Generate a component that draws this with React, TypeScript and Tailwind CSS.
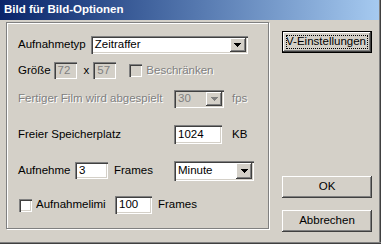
import React from "react";

const sunken =
  "shadow-[inset_1px_1px_#808080,inset_2px_2px_#404040,inset_-1px_-1px_#ffffff,inset_-2px_-2px_#d4d0c8]";
const raised =
  "shadow-[inset_-1px_-1px_#404040,inset_1px_1px_#ffffff,inset_-2px_-2px_#808080,inset_2px_2px_#d4d0c8]";
const grayText = "text-[#808080] [text-shadow:1px_1px_0_#ffffff]";

const Field = ({
  value,
  width,
  height,
  disabled,
}: {
  value: string;
  width: string;
  height: string;
  disabled?: boolean;
}) => (
  <div
    className={`${width} ${height} ${sunken} ${
      disabled ? "bg-[#d4d0c8] text-[#808080]" : "bg-white"
    } flex items-center pl-[4px] shrink-0`}
  >
    {value}
  </div>
);

const Arrow = ({ disabled }: { disabled?: boolean }) => (
  <svg width="7" height="4" viewBox="0 0 7 4" shapeRendering="crispEdges">
    <polygon points="0,0 7,0 3.5,4" fill={disabled ? "#808080" : "#000000"} />
  </svg>
);

const Combo = ({
  value,
  width,
  height,
  disabled,
}: {
  value: string;
  width: string;
  height: string;
  disabled?: boolean;
}) => (
  <div
    className={`${width} ${height} ${sunken} ${
      disabled ? "bg-[#d4d0c8] text-[#808080]" : "bg-white"
    } flex items-stretch p-[2px] shrink-0`}
  >
    <div className="flex-1 flex items-center pl-[2px]">{value}</div>
    <div className={`w-[16px] bg-[#d4d0c8] ${raised} flex items-center justify-center`}>
      <Arrow disabled={disabled} />
    </div>
  </div>
);

const Check = ({ disabled }: { disabled?: boolean }) => (
  <div
    className={`w-[13px] h-[13px] shrink-0 ${sunken} ${
      disabled ? "bg-[#d4d0c8]" : "bg-white"
    }`}
  />
);

const Button = ({ label, isDefault }: { label: string; isDefault?: boolean }) =>
  isDefault ? (
    <div className="w-[90px] h-[22px] border border-black bg-[#d4d0c8] shrink-0">
      <div className={`w-full h-full ${raised} p-[3px]`}>
        <div className="w-full h-full border border-dotted border-black flex items-center justify-end overflow-hidden whitespace-nowrap pr-[1px]">
          {label}
        </div>
      </div>
    </div>
  ) : (
    <div
      className={`w-[90px] h-[22px] bg-[#d4d0c8] ${raised} flex items-center justify-center shrink-0`}
    >
      {label}
    </div>
  );

export default function App() {
  return (
    <div className="w-[381px] h-[244px] bg-[#d4d0c8] font-['Liberation_Sans',Arial,sans-serif] text-[11.5px] leading-none text-black overflow-hidden flex flex-col shadow-[inset_0_-1px_#404040,inset_0_-2px_#808080,inset_-1px_0_#404040,inset_-2px_0_#808080]">
      <div className="h-[20px] mr-[2px] bg-linear-to-r from-[#0a246a] to-[#a6caf0] flex items-center pl-[4px] text-white font-bold shrink-0">
        Bild für Bild-Optionen
      </div>
      <div className="flex pl-[6px] pt-[2px]">
        <div className="w-[263px] h-[207px] border border-[#808080] shadow-[inset_1px_1px_#ffffff,1px_1px_#ffffff] pl-[11px] pt-[13px] flex flex-col">
          <div className="h-[18px] flex items-center">
            <span>Aufnahmetyp</span>
            <div className="ml-[5px]">
              <Combo value="Zeitraffer" width="w-[157px]" height="h-[18px]" />
            </div>
          </div>
          <div className="h-[17px] mt-[8px] flex items-center">
            <span>Größe</span>
            <div className="ml-[3px]">
              <Field value="72" width="w-[23px]" height="h-[17px]" disabled />
            </div>
            <span className="ml-[7px]">x</span>
            <div className="ml-[4px]">
              <Field value="57" width="w-[23px]" height="h-[17px]" disabled />
            </div>
            <div className="ml-[13px]">
              <Check disabled />
            </div>
            <span className={`ml-[4px] ${grayText}`}>Beschränken</span>
          </div>
          <div className="h-[18px] mt-[11px] flex items-center">
            <span className={`w-[156px] shrink-0 ${grayText}`}>
              Fertiger Film wird abgespielt
            </span>
            <Combo value="30" width="w-[50px]" height="h-[18px]" disabled />
            <span className={`ml-[8px] ${grayText}`}>fps</span>
          </div>
          <div className="h-[19px] mt-[17px] flex items-center">
            <span className="w-[156px] shrink-0">Freier Speicherplatz</span>
            <Field value="1024" width="w-[48px]" height="h-[19px]" />
            <span className="ml-[10px]">KB</span>
          </div>
          <div className="h-[19px] mt-[17px] flex items-center">
            <span className="w-[57px] shrink-0">Aufnehme</span>
            <Field value="3" width="w-[33px]" height="h-[17px]" />
            <span className="ml-[6px] w-[60px] shrink-0">Frames</span>
            <Combo value="Minute" width="w-[80px]" height="h-[20px]" />
          </div>
          <div className="h-[18px] mt-[16px] flex items-center">
            <div className="ml-[1px]">
              <Check />
            </div>
            <span className="ml-[4px] w-[70px] overflow-hidden whitespace-nowrap shrink-0">
              Aufnahmelimit
            </span>
            <div className="ml-[9px]">
              <Field value="100" width="w-[37px]" height="h-[18px]" />
            </div>
            <span className="ml-[6px]">Frames</span>
          </div>
        </div>
        <div className="ml-[13px] flex flex-col pt-[9px]">
          <Button label="TV-Einstellungen" isDefault />
          <div className="mt-[123px]">
            <Button label="OK" />
          </div>
          <div className="mt-[12px]">
            <Button label="Abbrechen" />
          </div>
        </div>
      </div>
    </div>
  );
}
